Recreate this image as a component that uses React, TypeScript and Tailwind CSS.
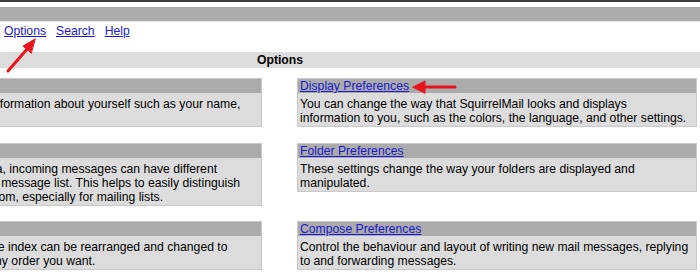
import React from 'react';

type Pref = { title: string; desc: string };

const rows: [Pref, Pref][] = [
  [
    { title: 'Personal Information', desc: 'This contains personal information about yourself such as your name, your email address, etc.' },
    { title: 'Display Preferences', desc: 'You can change the way that SquirrelMail looks and displays information to you, such as the colors, the language, and other settings.' },
  ],
  [
    { title: 'Message Highlighting', desc: 'Based upon given criteria, incoming messages can have different background colors in the message list. This helps to easily distinguish who the messages are from, especially for mailing lists.' },
    { title: 'Folder Preferences', desc: 'These settings change the way your folders are displayed and manipulated.' },
  ],
  [
    { title: 'Index Order', desc: 'The order of the message index can be rearranged and changed to contain the headers in any order you want.' },
    { title: 'Compose Preferences', desc: 'Control the behaviour and layout of writing new mail messages, replying to and forwarding messages.' },
  ],
];

function PrefBox({ pref }: { pref: Pref }) {
  return (
    <div className="border border-[#c9c9c9] bg-[#dcdcdc]">
      <div className="h-[14px] bg-[#ababab] px-[2px] leading-[15px]">
        <a href="#" className="text-[#1a1acc] underline">{pref.title}</a>
      </div>
      <div className="pl-[2px] pr-[6px] pt-[4px] pb-[1px] leading-[14px] text-black">{pref.desc}</div>
    </div>
  );
}

function Arrows() {
  return (
    <svg className="pointer-events-none absolute left-0 top-0" width="700" height="275">
      <g fill="#e8141b" stroke="#e8141b" strokeLinecap="round">
        <line x1="8" y1="71" x2="28" y2="48" strokeWidth="3" />
        <polygon points="35,39 23,46 31,53" strokeWidth="1" />
        <line x1="455" y1="87" x2="422" y2="87" strokeWidth="3" />
        <polygon points="413,87 425,81 425,93" strokeWidth="1" />
      </g>
    </svg>
  );
}

export default function App() {
  return (
    <div className="relative h-[275px] w-[700px] overflow-hidden bg-white font-['Liberation_Sans',Arial,sans-serif] text-[12.2px] text-black">
      <div className="h-[2px] bg-[#3a3a3a]" />
      <div className="h-[5px] bg-white" />
      <div className="h-[15px] border-b border-[#e6e6e6] bg-[#ababab]" />
      <div className="mt-[1px] flex h-[16px] items-center gap-[10px] px-[4px]">
        <a href="#" className="text-[#1a1acc] underline">Options</a>
        <a href="#" className="text-[#1a1acc] underline">Search</a>
        <a href="#" className="text-[#1a1acc] underline">Help</a>
      </div>
      <div className="ml-[-140px] w-[840px]">
        <div className="mt-[13px] flex h-[16px] items-center justify-center bg-[#dcdcdc] font-bold">Options</div>
        <div className="mt-[10px] grid grid-cols-[400px_400px] items-start gap-x-[35px] gap-y-[15.5px] pl-[2px]">
          {rows.map(([l, r]) => (
            <React.Fragment key={l.title}>
              <PrefBox pref={l} />
              <PrefBox pref={r} />
            </React.Fragment>
          ))}
        </div>
      </div>
      <Arrows />
    </div>
  );
}
